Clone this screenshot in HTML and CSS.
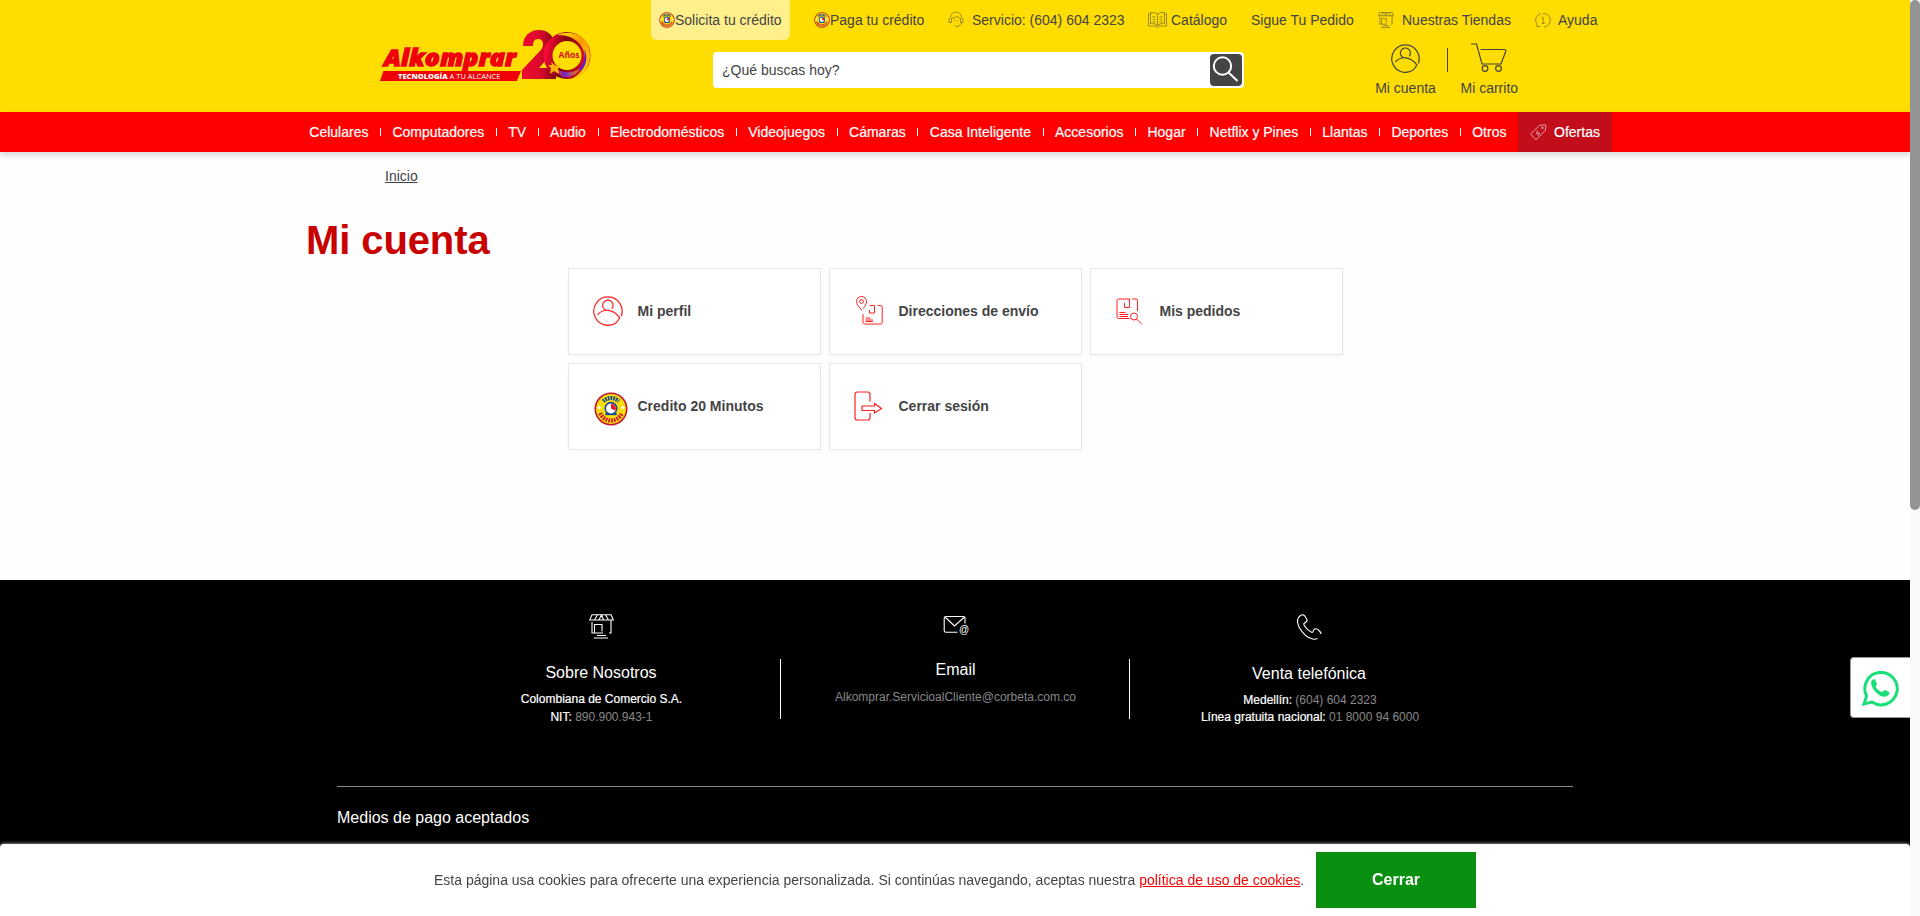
FILE: index.html
```html
<!DOCTYPE html>
<html lang="es">
<head>
<meta charset="utf-8">
<title>Mi cuenta | Alkomprar</title>
<link rel="stylesheet" href="styles.css">
</head>
<body>
<svg class="defs" width="0" height="0">
  <defs>
    <linearGradient id="two" x1="0" y1="0" x2="1" y2="0"><stop offset="0" stop-color="#f00a30"/><stop offset=".55" stop-color="#d80a2c"/><stop offset="1" stop-color="#7d0512"/></linearGradient>
    <linearGradient id="ring" x1="0" y1="0" x2="1" y2=".2"><stop offset="0" stop-color="#ff0a37"/><stop offset=".5" stop-color="#7a0510"/><stop offset="1" stop-color="#d10a2c"/></linearGradient>
    <linearGradient id="sun" x1="0" y1="0" x2="1" y2="1"><stop offset="0" stop-color="#ffe600"/><stop offset=".45" stop-color="#ff9800"/><stop offset="1" stop-color="#ffe600"/></linearGradient>
    <linearGradient id="low" x1="0" y1="0" x2="1" y2="0"><stop offset="0" stop-color="#ff3a18"/><stop offset=".4" stop-color="#7224c8"/><stop offset="1" stop-color="#ff8a00"/></linearGradient>
    <symbol id="coin" viewBox="0 0 33 33">
      <circle cx="16.500" cy="16.500" r="16" fill="#c01530"/><circle cx="16.500" cy="16.500" r="14.500" fill="#f7dc10"/>
      <path d="M9 9A10.500 10.500 0 0 1 24 9" fill="none" stroke="#174a94" stroke-width="4" stroke-dasharray="1.700 .9"/>
      <path d="M6 20.500A11.300 11.300 0 0 0 27 20.500" fill="none" stroke="#c81832" stroke-width="4" stroke-dasharray="1.700 1"/>
      <circle cx="16.500" cy="15.800" r="6.300" fill="#174a94"/><path d="M11 20h11v2.500H11z" fill="#174a94"/>
      <circle cx="16.500" cy="16" r="4.800" fill="#fff"/><path d="M16.500 16v-4.800a4.800 4.800 0 0 1 4.200 7z" fill="#e81d2d"/>
      <circle cx="5" cy="15" r="1.500" fill="#fff"/><circle cx="28" cy="15" r="1.500" fill="#fff"/>
    </symbol>
    <symbol id="user" viewBox="0 0 30 30">
      <path d="M28.200 20.300A14.200 14.200 0 1 0 23.500 26.500M28.600 18.500A14.200 14.200 0 0 0 29.100 14M4.500 18.800c5.500-6.500 15.500-6.500 22.300 3l-3.300 4.700M13 14.200a5.200 5.200 0 1 1 5.800-1.400"/>
    </symbol>
    <symbol id="store" viewBox="0 0 25 25">
      <path d="M3 .7h19l2.300 5.300H.7zM5.500 6l3-5.300M10 6l2.500-5.300M14.500 6l-2-5.300M19.500 6l-3-5.300M3 8v11h11M22 6v13h-2M5.500 18.500v-8h7.500v7M8 21.500h9M5 24h14"/>
    </symbol>
  </defs>
</svg>

<header class="header">
  <a class="logo">
    <span class="logo-name">Alkomprar</span>
    <span class="logo-band"><b>TECNOLOGÍA</b>&nbsp;A TU ALCANCE</span>
    <svg class="logo-20" width="72" height="52" viewBox="0 0 72 52">
      <path d="M2 17C2 7 9 1 18 1s15 6 15 14c0 7-3 11-8 16l-7 8h17v11H1v-9l17-18c3-3 4-5 4-8 0-3-2-5-5-5-4 0-5 3-5 7z" fill="url(#two)"/>
      <circle cx="46" cy="26.500" r="19" fill="none" stroke="url(#ring)" stroke-width="9"/>
      <path d="M36 6C53-1 70 9 69 28c-1 11-8 20-19 22 8-4 13-9 14-19C65 17 53 5 36 6z" fill="url(#sun)"/>
      <path d="M63 20c2 8 0 15-6 21l3 1c6-6 7-15 3-22z" fill="#6a20bb"/>
      <path d="M33 38c7 6 16 7 26 2-4 6-10 9-18 8z" fill="url(#low)"/>
      <path d="M30 33l5 4 5-2-3 5 1 5-5-3-4 3 1-6-3-3h4z" fill="#ffb400"/>
      <text x="48" y="29" text-anchor="middle" class="logo-years">Años</text>
    </svg>
  </a>
  <div class="head-main">
    <nav class="top">
      <a class="top-item top-credit"><svg width="16" height="16"><use href="#coin"/></svg>Solicita tu crédito</a>
      <a class="top-item top-pay"><svg width="16" height="16"><use href="#coin"/></svg>Paga tu crédito</a>
      <a class="top-item top-service"><svg class="line thin" width="16" height="16" viewBox="0 0 16 16"><path d="M2.500 5.500a5.500 5.500 0 0 1 11 0M2.500 5.500L1 7v3.500h2.500V6M13.500 5.500L15 7v3.500h-2.500V6M4 6c3 0 4-1 5-2 1 2 2 2 3 2M6.500 8v1M10 8v1M13.500 11l-2 2.500L8.500 15l-1.500-2"/></svg>Servicio: (604) 604 2323</a>
      <a class="top-item top-cat"><svg class="line thin" width="19" height="16" viewBox="0 0 19 16"><path d="M2.500 2H.5v12H7c1 0 2 .5 2.500 1.500C10 14.500 11 14 12 14h6.500V2h-2M2.500.5c3 0 5 0 7 1.700C11.500.5 13.500.5 16.500.5v11c-3 0-5 .3-7 2-2-1.700-4-2-7-2zM9.500 2v11M4.500 4.500l3 .7M4.500 7l3 .7M4.500 9.500l3 .7M11.500 5.200l3-.7M11.500 7.700l3-.7M11.500 10.200l3-.7"/></svg>Catálogo</a>
      <a class="top-item top-order">Sigue Tu Pedido</a>
      <a class="top-item top-stores"><svg class="line thin" width="16" height="16"><use href="#store"/></svg>Nuestras Tiendas</a>
      <a class="top-item top-help"><svg class="line thin" width="14" height="15" viewBox="0 0 14 15"><path d="M4.500 13.500H.8V11A6.600 6.600 0 0 1 5 .8M7 .500a6.500 6.500 0 1 1 1 13.500M5.500 5H7.200v5.500M5.500 10.500h3.300M7 2.800v.8"/></svg>Ayuda</a>
    </nav>
    <div class="head-row">
      <div class="search"><span>¿Qué buscas hoy?</span>
        <button class="search-btn" aria-label="Buscar"><svg width="32" height="32" viewBox="0 0 32 32"><circle cx="12.500" cy="12" r="8.700"/><path d="M18.500 18.500l9 8.500"/></svg></button>
      </div>
      <a class="tool tool-account"><svg class="line" width="29" height="29"><use href="#user"/></svg>Mi cuenta</a>
      <i class="tool-sep"></i>
      <a class="tool tool-cart"><svg class="line" width="36" height="29" viewBox="0 0 36 29"><path d="M0 1h5.500l5.500 20h19L34.700 8.500c.4-1.500-.2-2-1.500-2H9.500"/><circle cx="14" cy="25.500" r="2.800"/><circle cx="27.500" cy="25.500" r="2.800"/></svg>Mi carrito</a>
    </div>
  </div>
</header>

<nav class="menu">
  <a>Celulares</a><a>Computadores</a><a>TV</a><a>Audio</a><a>Electrodomésticos</a><a>Videojuegos</a><a>Cámaras</a><a>Casa Inteligente</a><a>Accesorios</a><a>Hogar</a><a>Netflix y Pines</a><a>Llantas</a><a>Deportes</a><a>Otros</a>
  <a class="offers"><svg width="17" height="16" viewBox="0 0 17 16"><path d="M9.500 1.500L15 .7l1 .8-.8 5L7 15l-1.500.3L1 10.500v-1zM13 3.200v1.200h-1.200V3.200zM7.500 6.500l-1 3 3-.5-1.500 3"/></svg>Ofertas</a>
</nav>

<main class="main">
  <a class="crumb">Inicio</a>
  <h1>Mi cuenta</h1>
  <div class="cards">
    <a class="card"><span class="ico"><svg class="red" width="30" height="30"><use href="#user"/></svg></span>Mi perfil</a>
    <a class="card"><span class="ico ico-map"><svg class="red thinner" width="28" height="29" viewBox="0 0 28 29"><path d="M7 14.500C4 10.500 1.500 8.500 1.500 5.500a5 5 0 0 1 10 0c0 3-2 4.500-3 7"/><circle cx="6.500" cy="5.500" r="1.900"/><path d="M14.500 9.500h5v7.500h-5v-3M22.500 9.500h3.200q1.500 0 1.500 1.500v15.500q0 1.500-1.500 1.500H9.500Q8 28 8 26.500V18M10.500 22h5M10.500 24h7.500M10.500 25.500h7.500"/></svg></span>Direcciones de envío</a>
    <a class="card"><span class="ico ico-order"><svg class="red thinner" width="27" height="27" viewBox="0 0 27 27"><path d="M21.500 13V2.500q0-1.500-1.500-1.500h-4M13.500 20.500H2.500q-1.500 0-1.500-1.500V2.500Q1 1 2.500 1h11v8.500H8.500V5M3.500 14.500h6M3.500 16.500h8.500M3.500 18.500h8.500"/><circle cx="18" cy="18.500" r="3.500"/><path d="M20.500 21l5.500 5.500"/></svg></span>Mis pedidos</a>
    <a class="card"><span class="ico ico-coin"><svg width="34" height="34"><use href="#coin"/></svg></span>Credito 20 Minutos</a>
    <a class="card"><span class="ico ico-out"><svg class="red" width="29" height="30" viewBox="0 0 29 30"><path d="M16 10.500V3.500q0-2.500-2.500-2.500H3.500Q1 1 1 3.500v23Q1 29 3.500 29h10q2.500 0 2.500-2.500V22M8 15h12.500v-2.500l7 5-7 4.500v-2.500H8z"/></svg></span>Cerrar sesión</a>
  </div>
</main>

<footer class="footer">
  <div class="info">
    <section class="col col-about"><svg class="white" width="25" height="25"><use href="#store"/></svg><h2>Sobre Nosotros</h2><p><b>Colombiana de Comercio S.A.</b></p><p><b>NIT:</b> 890.900.943-1</p></section>
    <section class="col col-mail"><svg class="white" width="26" height="21" viewBox="0 0 26 21"><path d="M14.500 17.200H3q-1.800 0-1.800-1.700V3Q1.200 1.500 3 1.500h17.500q1.500 0 1.500 1.500v5.500M2 2l9.500 9L21.500 2"/><text x="16" y="18">@</text></svg><h2>Email</h2><p>Alkomprar.ServicioalCliente@corbeta.com.co</p></section>
    <section class="col col-phone"><svg class="white" width="26" height="26" viewBox="0 0 26 26"><path d="M7.500 10l3-2.500c1.500-1 .3-2.300-1-4.500C8 .5 6 .3 4.500 1.500 1 4 .5 8 3 13c3.500 6.500 9 11.300 14.500 12.200q2 .3 4-.7M7.500 10c2 4 5 6.700 8.500 8.500M16 18.500c1.500 0 1-1.500 2-3 1-1.300 3-1 4.500.5 1.500 1.300 2.500 2.500 2.500 4"/></svg><h2>Venta telefónica</h2><p><b>Medellín:</b> (604) 604 2323</p><p><b>Línea gratuita nacional:</b> 01 8000 94 6000</p></section>
  </div>
  <div class="pay">Medios de pago aceptados</div>
</footer>

<a class="whatsapp" aria-label="WhatsApp"><svg width="36" height="36" viewBox="0 0 36 36"><path d="M2 34l2.600-8A16.200 16.200 0 1 1 10 32.100z" fill="none" stroke="#18df78" stroke-width="3"/><path d="M9.200 12c.3-2 2-3.200 3.800-2.400l2 4.300c.3.900-1.200 2-1.300 2.700 1.200 2.700 3.800 4.700 6.500 5.700l2.400-2.300 4.600 2.100c.7 2.500-1.500 4.500-4.500 4.700-6 .1-14.200-8.400-13.500-14.800z" fill="#18df78"/></svg></a>

<div class="cookies"><p>Esta página usa cookies para ofrecerte una experiencia personalizada. Si continúas navegando, aceptas nuestra <a>política de uso de cookies</a>.</p><button>Cerrar</button></div>
<div class="scroll"><i></i></div>
</body>
</html>
```
FILE: styles.css
```css
* { box-sizing: border-box; margin: 0; padding: 0; }
body { width: 1920px; height: 916px; padding-right: 10px; overflow: hidden; background: #fefefe; color: #444; font: 14px/20px "Liberation Sans", Arial, sans-serif; }
svg { display: block; flex: none; overflow: visible; }
.defs { position: absolute; }

.header { display: flex; height: 112px; padding-left: 380px; background: #fd0; }
.logo { position: relative; width: 271px; }
.logo-name { position: absolute; left: 4px; top: 42px; color: #f00008; font: italic 900 23px/30px "Open Sans", sans-serif; letter-spacing: .2px; -webkit-text-stroke: 1.3px #f00008; text-shadow: 0 0 2px #fff, 0 0 1px #fff; transform: scaleX(1.080); transform-origin: left; }
.logo-band { position: absolute; left: 0; top: 71px; width: 141px; height: 10px; padding-left: 18px; background: #f00008; clip-path: polygon(2.500% 0, 100% 0, 97% 100%, 0 100%); color: #fff; font: 7.500px/11px "Open Sans", sans-serif; white-space: nowrap; }
.logo-band b { font-weight: 800; }
.logo-20 { position: absolute; left: 141px; top: 29px; }
.logo-years { fill: #d40f2c; font: bold 8.500px "Open Sans", sans-serif; }

.top { display: flex; height: 40px; }
.top-item { display: flex; align-items: center; white-space: nowrap; color: #444; }
.top-credit { width: 139px; padding-left: 8px; border-radius: 0 0 6px 6px; background: #fff08c; }
.top-pay { width: 134px; margin-left: 24px; }
.top-service { gap: 8px; width: 200px; }
.top-cat { gap: 4px; width: 103px; }
.top-order { width: 127px; }
.top-stores { gap: 8px; width: 158px; }
.top-help { gap: 8px; }
.line { fill: none; stroke: #444; stroke-width: 1.200; }
.thin { stroke-width: .7; opacity: .75; }
.top-stores .line { stroke-width: 1.100; }

.head-row { display: flex; align-items: flex-start; padding-left: 62px; }
.search { display: flex; align-items: center; justify-content: space-between; width: 531px; height: 36px; margin: 12px 131px 0 0; padding: 0 2px 0 9px; border-radius: 4px; background: #fff; }
.search-btn { width: 32px; height: 32px; border: 0; border-radius: 4px; background: #444; }
.search-btn svg { fill: none; stroke: #fff; stroke-width: 2; }
.tool { display: flex; flex-direction: column; gap: 6px; align-items: center; margin-top: 3px; white-space: nowrap; }
.tool-account { width: 61px; }
.tool-sep { width: 1px; height: 24px; margin: 8px 12.500px 0 11px; background: #444; }
.tool-account svg { margin-top: 1px; }
.tool-account { gap: 5px; }

.menu { display: flex; position: relative; height: 40px; padding-left: 297.400px; background: #f00; box-shadow: 0 3px 6px rgba(0, 0, 0, .16); color: #fff; -webkit-text-stroke: .2px #fff; }
.menu a { display: flex; align-items: center; padding: 0 11.600px 0 11.900px; white-space: nowrap; }
.menu a:not(.offers)::after { content: ""; width: 1px; height: 8px; margin-right: -12.100px; margin-left: 11.600px; background: #fff; }
.menu .offers { gap: 7px; width: 94px; margin-left: -.500px; padding: 0 0 0 12px; background: #c20d1a; }
.menu .offers svg { fill: none; stroke: #fff; stroke-width: .7; opacity: .85; }

.main { height: 428px; padding: 14px 0 0 306px; }
.crumb { display: block; padding-left: 79px; text-decoration: underline; }
h1 { margin-top: 31px; color: #c80000; font-size: 40px; line-height: 46px; letter-spacing: -.1px; }
.cards { display: grid; grid-template-columns: repeat(3, 253px); grid-auto-rows: 87px; gap: 8px; margin: 5px 0 0 262px; }
.card { display: flex; align-items: center; padding: 0 0 2px 24px; border: 1px solid #e6e6e6; background: #fff; box-shadow: 0 3px 6px rgba(0, 0, 0, .02); font-weight: bold; }
.ico { width: 44.500px; }
.ico-map { padding-left: 1px; }
.ico-order { padding: 2px 0 0 1px; }
.ico-coin { padding: 6px 0 0 1px; }
.red { fill: none; stroke: #ff2020; stroke-width: 1.200; }
.thinner { stroke-width: 1; }

.footer { height: 336px; background: #000; color: #888; }
.info { display: grid; grid-template-columns: 360px 349px 360px; justify-content: start; height: 206px; padding: 34px 0 0 421px; font-size: 12px; line-height: 18px; text-align: center; }
.col { display: flex; position: relative; flex-direction: column; align-items: center; }
.col h2 { margin: 24px 0 7px; color: #fff; font-size: 16px; font-weight: normal; line-height: 20px; }
.col b { color: #fff; font-weight: normal; -webkit-text-stroke: .2px #fff; }
.col-about p { padding-left: 1px; }
.col-mail svg { margin-top: 1px; }
.col-mail h2 { margin-bottom: 8px; }
.col-phone svg, .col-phone h2 { transform: translateX(-1px); }
.col-phone p + p { margin-top: -1px; }
.col + .col::before { content: ""; position: absolute; left: -1px; top: 45px; width: 1px; height: 60px; background: #fff; }
.white { fill: none; stroke: #fff; stroke-width: 1.100; }
.white text { fill: #fff; stroke: none; font-size: 10px; }
.pay { width: 1236px; margin-left: 337px; padding-top: 21px; border-top: 1px solid #888; color: #fff; font-size: 16px; }

.whatsapp { position: fixed; top: 657px; right: 10px; width: 60px; height: 61px; padding: 12px 11px; border: 1px solid #999; border-right: 0; border-radius: 4px 0 0 4px; background: #fff; }
.cookies { display: flex; position: fixed; inset: 844px 10px 0 0; align-items: flex-start; padding: 8px 0 0 434px; border-radius: 4px 4px 0 0; background: #fff; box-shadow: 0 -1px 3px rgba(255, 255, 255, .5); }
.cookies p { width: 882px; padding-top: 18px; white-space: nowrap; }
.cookies a { color: #f00; text-decoration: underline; }
.cookies button { width: 160px; height: 56px; border: 0; background: #0a9010; color: #fff; font: bold 16px "Liberation Sans", Arial, sans-serif; }
.scroll { position: fixed; inset: 0 0 0 1910px; background: #fafafa; }
.scroll i { display: block; height: 510px; border-radius: 5px; background: #949494; }
```
